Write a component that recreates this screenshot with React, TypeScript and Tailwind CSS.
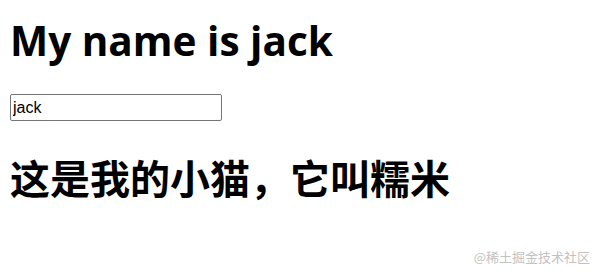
export default function App() {
  return (
    <div className="relative h-[275px] w-[599px] overflow-hidden bg-white text-black">
      <div className="flex flex-col items-start px-[10px]">
        <h1 className="mt-[14px] font-['Open_Sans','Noto_Sans',sans-serif] text-[40.5px] font-bold leading-[54px]">
          My name is jack
        </h1>
        <input
          defaultValue="jack"
          className="mt-[26px] h-[27px] w-[212px] rounded-[2px] border border-[#767676] px-[2px] font-['Liberation_Sans',Arial,sans-serif] text-[16px] outline-none"
        />
        <h2 className="mt-[30px] font-['Noto_Sans_CJK_SC',sans-serif] text-[40px] font-bold leading-[52px]">
          这是我的小猫，它叫糯米
        </h2>
      </div>
      <div className="absolute bottom-[9px] right-[9px] font-['Noto_Sans_CJK_SC',sans-serif] text-[13px] text-[#c2c2c2]">
        @稀土掘金技术社区
      </div>
    </div>
  )
}
